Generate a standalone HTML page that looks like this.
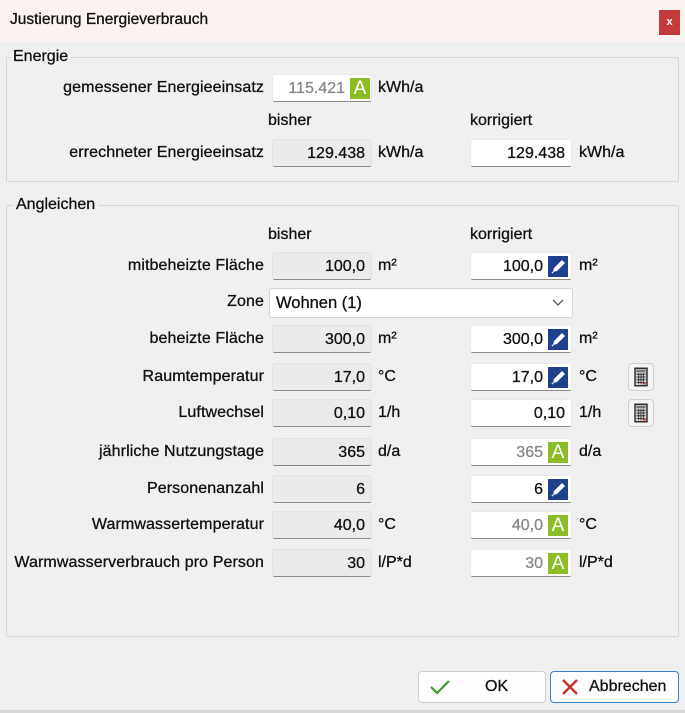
<!DOCTYPE html>
<html><head><meta charset="utf-8"><style>
*{box-sizing:border-box;margin:0;padding:0}
body{width:685px;height:713px;background:#f0f0f0;font-family:"Liberation Sans",sans-serif;font-size:16px;color:#111;position:relative;overflow:hidden;-webkit-text-stroke:0.3px}
.a{position:absolute}
.title{left:0;top:0;width:685px;height:42px;background:#faf3f0}
.close{left:659px;top:10px;width:21px;height:25px;background:#c4393b;color:#fff;font-size:11px;font-weight:bold;text-align:center;line-height:24px}
.grp{border:1px solid #d6d6d6;border-radius:2px}
.leg{background:#f0f0f0;padding:0 3px;font-size:16px}
.lbl{text-align:right;line-height:28px;height:28px;letter-spacing:0.1px}
.f{height:28px;line-height:27px;text-align:right;padding-right:6px;border-bottom:1px solid #8a8a8a;border-radius:3px}
.g{background:#ebebeb;border:1px solid #e2e2e2;border-bottom:1px solid #8a8a8a}
.w{background:#fff;border:1px solid #eaeaea;border-bottom:1px solid #8a8a8a}
.grey{color:#888}
.ico{width:20px;height:21px;text-align:center;line-height:22px;font-size:19px;color:#fff;-webkit-text-stroke:0}
.A{background:#8cbd26}
.P{background:#1f3f8f}
.u{line-height:28px}
.calc{width:26px;height:28px;border:1px solid #d0d0d0;border-radius:4px;background:#f5f5f5}
.btn{height:32px;border:1px solid #cfcfcf;border-radius:4px;background:#fdfdfd;font-size:16px;line-height:30px}
</style></head><body>
<div class="a title"></div>
<div class="a" style="left:10px;top:11px;font-size:15.5px">Justierung Energieverbrauch</div>
<div class="a close" style="-webkit-text-stroke:0">x</div>

<div class="a grp" style="left:6px;top:57px;width:673px;height:125px"></div>
<div class="a leg" style="left:10px;top:48px">Energie</div>
<div class="a lbl" style="left:0;top:74px;width:264px">gemessener Energieeinsatz</div>
<div class="a f w grey" style="left:272px;top:74px;width:100px;padding-right:26px">115.421</div>
<div class="a ico A" style="left:350px;top:78px">A</div>
<div class="a u" style="left:378px;top:74px">kWh/a</div>
<div class="a" style="left:268px;top:112px">bisher</div>
<div class="a" style="left:470px;top:112px">korrigiert</div>
<div class="a lbl" style="left:0;top:139px;width:264px">errechneter Energieeinsatz</div>
<div class="a f g" style="left:272px;top:139px;width:100px">129.438</div>
<div class="a u" style="left:378px;top:139px">kWh/a</div>
<div class="a f w" style="left:470px;top:139px;width:102px">129.438</div>
<div class="a u" style="left:579px;top:139px">kWh/a</div>

<div class="a grp" style="left:6px;top:205px;width:673px;height:432px"></div>
<div class="a leg" style="left:13px;top:196px">Angleichen</div>
<div class="a" style="left:268px;top:226px">bisher</div>
<div class="a" style="left:470px;top:226px">korrigiert</div>

<svg width="0" height="0" style="position:absolute"><defs><symbol id="pen" viewBox="0 0 20 21"><path d="M5 16 L6 12 L14 4 L17 7 L9 15 Z" fill="#fff"/><path d="M4 17 L5 16" stroke="#fff" stroke-width="1.5"/></symbol></defs></svg>

<div class="a lbl" style="left:0;top:252px;width:264px">mitbeheizte Fläche</div>
<div class="a f g" style="left:272px;top:252px;width:100px">100,0</div>
<div class="a u" style="left:378px;top:252px">m²</div>
<div class="a f w" style="left:470px;top:252px;width:102px;padding-right:28px">100,0</div>
<svg class="a ico P" style="left:548px;top:256px"><use href="#pen"/></svg>
<div class="a u" style="left:579px;top:252px">m²</div>

<div class="a lbl" style="left:0;top:288px;width:264px">Zone</div>
<div class="a" style="left:269px;top:288px;width:304px;height:30px;background:#fff;border:1px solid #d4d4d4;border-radius:3px;line-height:28px;padding-left:6px;font-size:16.5px">Wohnen (1)<svg style="position:absolute;right:8px;top:10px" width="12" height="8"><path d="M1 1 L6 6 L11 1" stroke="#555" fill="none" stroke-width="1.3"/></svg></div>

<div class="a lbl" style="left:0;top:325px;width:264px">beheizte Fläche</div>
<div class="a f g" style="left:272px;top:325px;width:100px">300,0</div>
<div class="a u" style="left:378px;top:325px">m²</div>
<div class="a f w" style="left:470px;top:325px;width:102px;padding-right:28px">300,0</div>
<svg class="a ico P" style="left:548px;top:329px"><use href="#pen"/></svg>
<div class="a u" style="left:579px;top:325px">m²</div>

<div class="a lbl" style="left:0;top:363px;width:264px">Raumtemperatur</div>
<div class="a f g" style="left:272px;top:363px;width:100px">17,0</div>
<div class="a u" style="left:378px;top:363px">°C</div>
<div class="a f w" style="left:470px;top:363px;width:102px;padding-right:28px">17,0</div>
<svg class="a ico P" style="left:548px;top:367px"><use href="#pen"/></svg>
<div class="a u" style="left:579px;top:363px">°C</div>
<svg class="a calc" style="left:628px;top:363px" viewBox="0 0 26 28"><rect x="6.5" y="4.5" width="13" height="19" fill="#ddd" stroke="#222" stroke-width="1.5"/><rect x="8" y="6" width="10" height="3" fill="#777"/><path d="M8 11h10M8 14h10M8 17h10M8 20h10M10.5 10v12M13 10v12M15.5 10v12" stroke="#333"/><rect x="15" y="20" width="3" height="2" fill="#d22"/></svg>

<div class="a lbl" style="left:0;top:399px;width:264px">Luftwechsel</div>
<div class="a f g" style="left:272px;top:399px;width:100px">0,10</div>
<div class="a u" style="left:378px;top:399px">1/h</div>
<div class="a f w" style="left:470px;top:399px;width:102px">0,10</div>
<div class="a u" style="left:579px;top:399px">1/h</div>
<svg class="a calc" style="left:628px;top:399px" viewBox="0 0 26 28"><rect x="6.5" y="4.5" width="13" height="19" fill="#ddd" stroke="#222" stroke-width="1.5"/><rect x="8" y="6" width="10" height="3" fill="#777"/><path d="M8 11h10M8 14h10M8 17h10M8 20h10M10.5 10v12M13 10v12M15.5 10v12" stroke="#333"/><rect x="15" y="20" width="3" height="2" fill="#d22"/></svg>

<div class="a lbl" style="left:0;top:438px;width:264px">jährliche Nutzungstage</div>
<div class="a f g" style="left:272px;top:438px;width:100px">365</div>
<div class="a u" style="left:378px;top:438px">d/a</div>
<div class="a f w grey" style="left:470px;top:438px;width:102px;padding-right:28px">365</div>
<div class="a ico A" style="left:548px;top:442px">A</div>
<div class="a u" style="left:579px;top:438px">d/a</div>

<div class="a lbl" style="left:0;top:475px;width:264px">Personenanzahl</div>
<div class="a f g" style="left:272px;top:475px;width:100px">6</div>
<div class="a f w" style="left:470px;top:475px;width:102px;padding-right:28px">6</div>
<svg class="a ico P" style="left:548px;top:479px"><use href="#pen"/></svg>

<div class="a lbl" style="left:0;top:511px;width:264px">Warmwassertemperatur</div>
<div class="a f g" style="left:272px;top:511px;width:100px">40,0</div>
<div class="a u" style="left:378px;top:511px">°C</div>
<div class="a f w grey" style="left:470px;top:511px;width:102px;padding-right:28px">40,0</div>
<div class="a ico A" style="left:548px;top:515px">A</div>
<div class="a u" style="left:579px;top:511px">°C</div>

<div class="a lbl" style="left:0;top:549px;width:264px">Warmwasserverbrauch pro Person</div>
<div class="a f g" style="left:272px;top:549px;width:100px">30</div>
<div class="a u" style="left:378px;top:549px">l/P*d</div>
<div class="a f w grey" style="left:470px;top:549px;width:102px;padding-right:28px">30</div>
<div class="a ico A" style="left:548px;top:553px">A</div>
<div class="a u" style="left:579px;top:549px">l/P*d</div>

<div class="a btn" style="left:418px;top:671px;width:128px"><svg style="position:absolute;left:10px;top:7px" width="22" height="16"><path d="M2 8 L8 14 L20 2" stroke="#3a9a2a" stroke-width="2.2" fill="none"/></svg><span style="position:absolute;left:66px">OK</span></div>
<div class="a btn" style="left:550px;top:671px;width:129px;border:1px solid #3b7fd0"><svg style="position:absolute;left:10px;top:6px" width="18" height="18"><path d="M2 2 L16 16 M16 2 L2 16" stroke="#c9302c" stroke-width="2.4"/></svg><span style="position:absolute;left:38px">Abbrechen</span></div>
<div class="a" style="left:0;top:710px;width:685px;height:3px;background:#d8d8d8"></div>
</body></html>
